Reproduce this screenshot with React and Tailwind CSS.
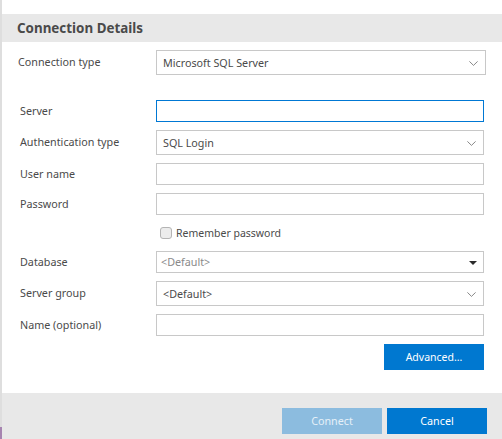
import React from 'react';

const Chevron = () => (
  <svg width="9" height="5" viewBox="0 0 9 5" className="mr-[7px] mt-[2px] shrink-0">
    <path d="M0.4 0.4 L4.5 4.4 L8.6 0.4" fill="none" stroke="#7a7a7a" strokeWidth="0.9" />
  </svg>
);

const Row = ({ label, labelClass = 'pl-[18px]', className = '', children }) => (
  <div className={`flex items-center ${className}`}>
    <div className={`w-[154px] shrink-0 text-[#4a4a4a] ${labelClass}`}>{label}</div>
    {children}
  </div>
);

const TextBox = ({ borderClass = 'border-[#c8c8c8]' }) => (
  <input type="text" className={`block h-[22px] w-[328px] border bg-white outline-none ${borderClass}`} />
);

const SelectBox = ({ value, className = 'w-[328px]' }) => (
  <div className={`flex h-[25px] items-center justify-between border border-[#c8c8c8] bg-white pl-[6px] text-[#4a4a4a] ${className}`}>
    <span>{value}</span>
    <Chevron />
  </div>
);

export default function App() {
  return (
    <div className="relative flex h-[439px] w-[502px] flex-col overflow-hidden bg-white pl-[2px] font-['Noto_Sans','Open_Sans',sans-serif] text-[10.75px] leading-[16px]">
      <div className="absolute left-0 top-0 h-full w-[2px] bg-[#dedede]">
        <div className="absolute bottom-0 left-0 h-[12px] w-[2px] bg-[#a684b0]" />
      </div>

      <div className="mt-[14px] flex h-[28px] items-center bg-[#e8e8e8] pl-[15px] text-[13.4px] font-bold text-[#4a4a4a]">
        Connection Details
      </div>

      <Row label="Connection type" labelClass="pl-[16px] -translate-y-[1px]" className="mt-[8px]">
        <SelectBox value="Microsoft SQL Server" className="w-[330px]" />
      </Row>

      <Row label="Server" className="mt-[25px]">
        <TextBox borderClass="border-[#0078d4]" />
      </Row>

      <Row label="Authentication type" labelClass="pl-[18px] -translate-y-[1px]" className="mt-[8px]">
        <SelectBox value="SQL Login" />
      </Row>

      <Row label="User name" className="mt-[8px]">
        <TextBox />
      </Row>

      <Row label="Password" className="mt-[8px]">
        <TextBox />
      </Row>

      <div className="ml-[158px] mt-[10px] flex h-[16px] items-center text-[10.5px] text-[#4a4a4a]">
        <span className="h-[12px] w-[12px] rounded-[3px] border border-[#b4b4b4] bg-[#ececec]" />
        <span className="ml-[4px]">Remember password</span>
      </div>

      <Row label="Database" className="mt-[10px]">
        <div className="flex h-[22px] w-[328px] items-center justify-between border border-[#c8c8c8] bg-white pl-[4px] text-[#8a8a8a]">
          <span>&lt;Default&gt;</span>
          <span className="mr-[6px] mt-[1px] h-0 w-0 border-x-[4px] border-t-[4px] border-x-transparent border-t-[#2b2b2b]" />
        </div>
      </Row>

      <Row label="Server group" labelClass="pl-[18px] -translate-y-[1px]" className="mt-[8px]">
        <SelectBox value="<Default>" />
      </Row>

      <Row label="Name (optional)" className="mt-[8px]">
        <TextBox />
      </Row>

      <div className="ml-[382px] mt-[8px] flex h-[26px] w-[100px] items-center justify-center bg-[#0078d0] text-[10.5px] text-white">
        Advanced...
      </div>

      <div className="mt-[23px] flex h-[46px] justify-end gap-[5px] bg-[#e8e8e8] pr-[15px] pt-[15px]">
        <div className="flex h-[26px] w-[100px] items-center justify-center bg-[#8cbcdf] text-[#e6f0f8]">Connect</div>
        <div className="flex h-[26px] w-[100px] items-center justify-center bg-[#0078d0] text-white">Cancel</div>
      </div>
    </div>
  );
}
